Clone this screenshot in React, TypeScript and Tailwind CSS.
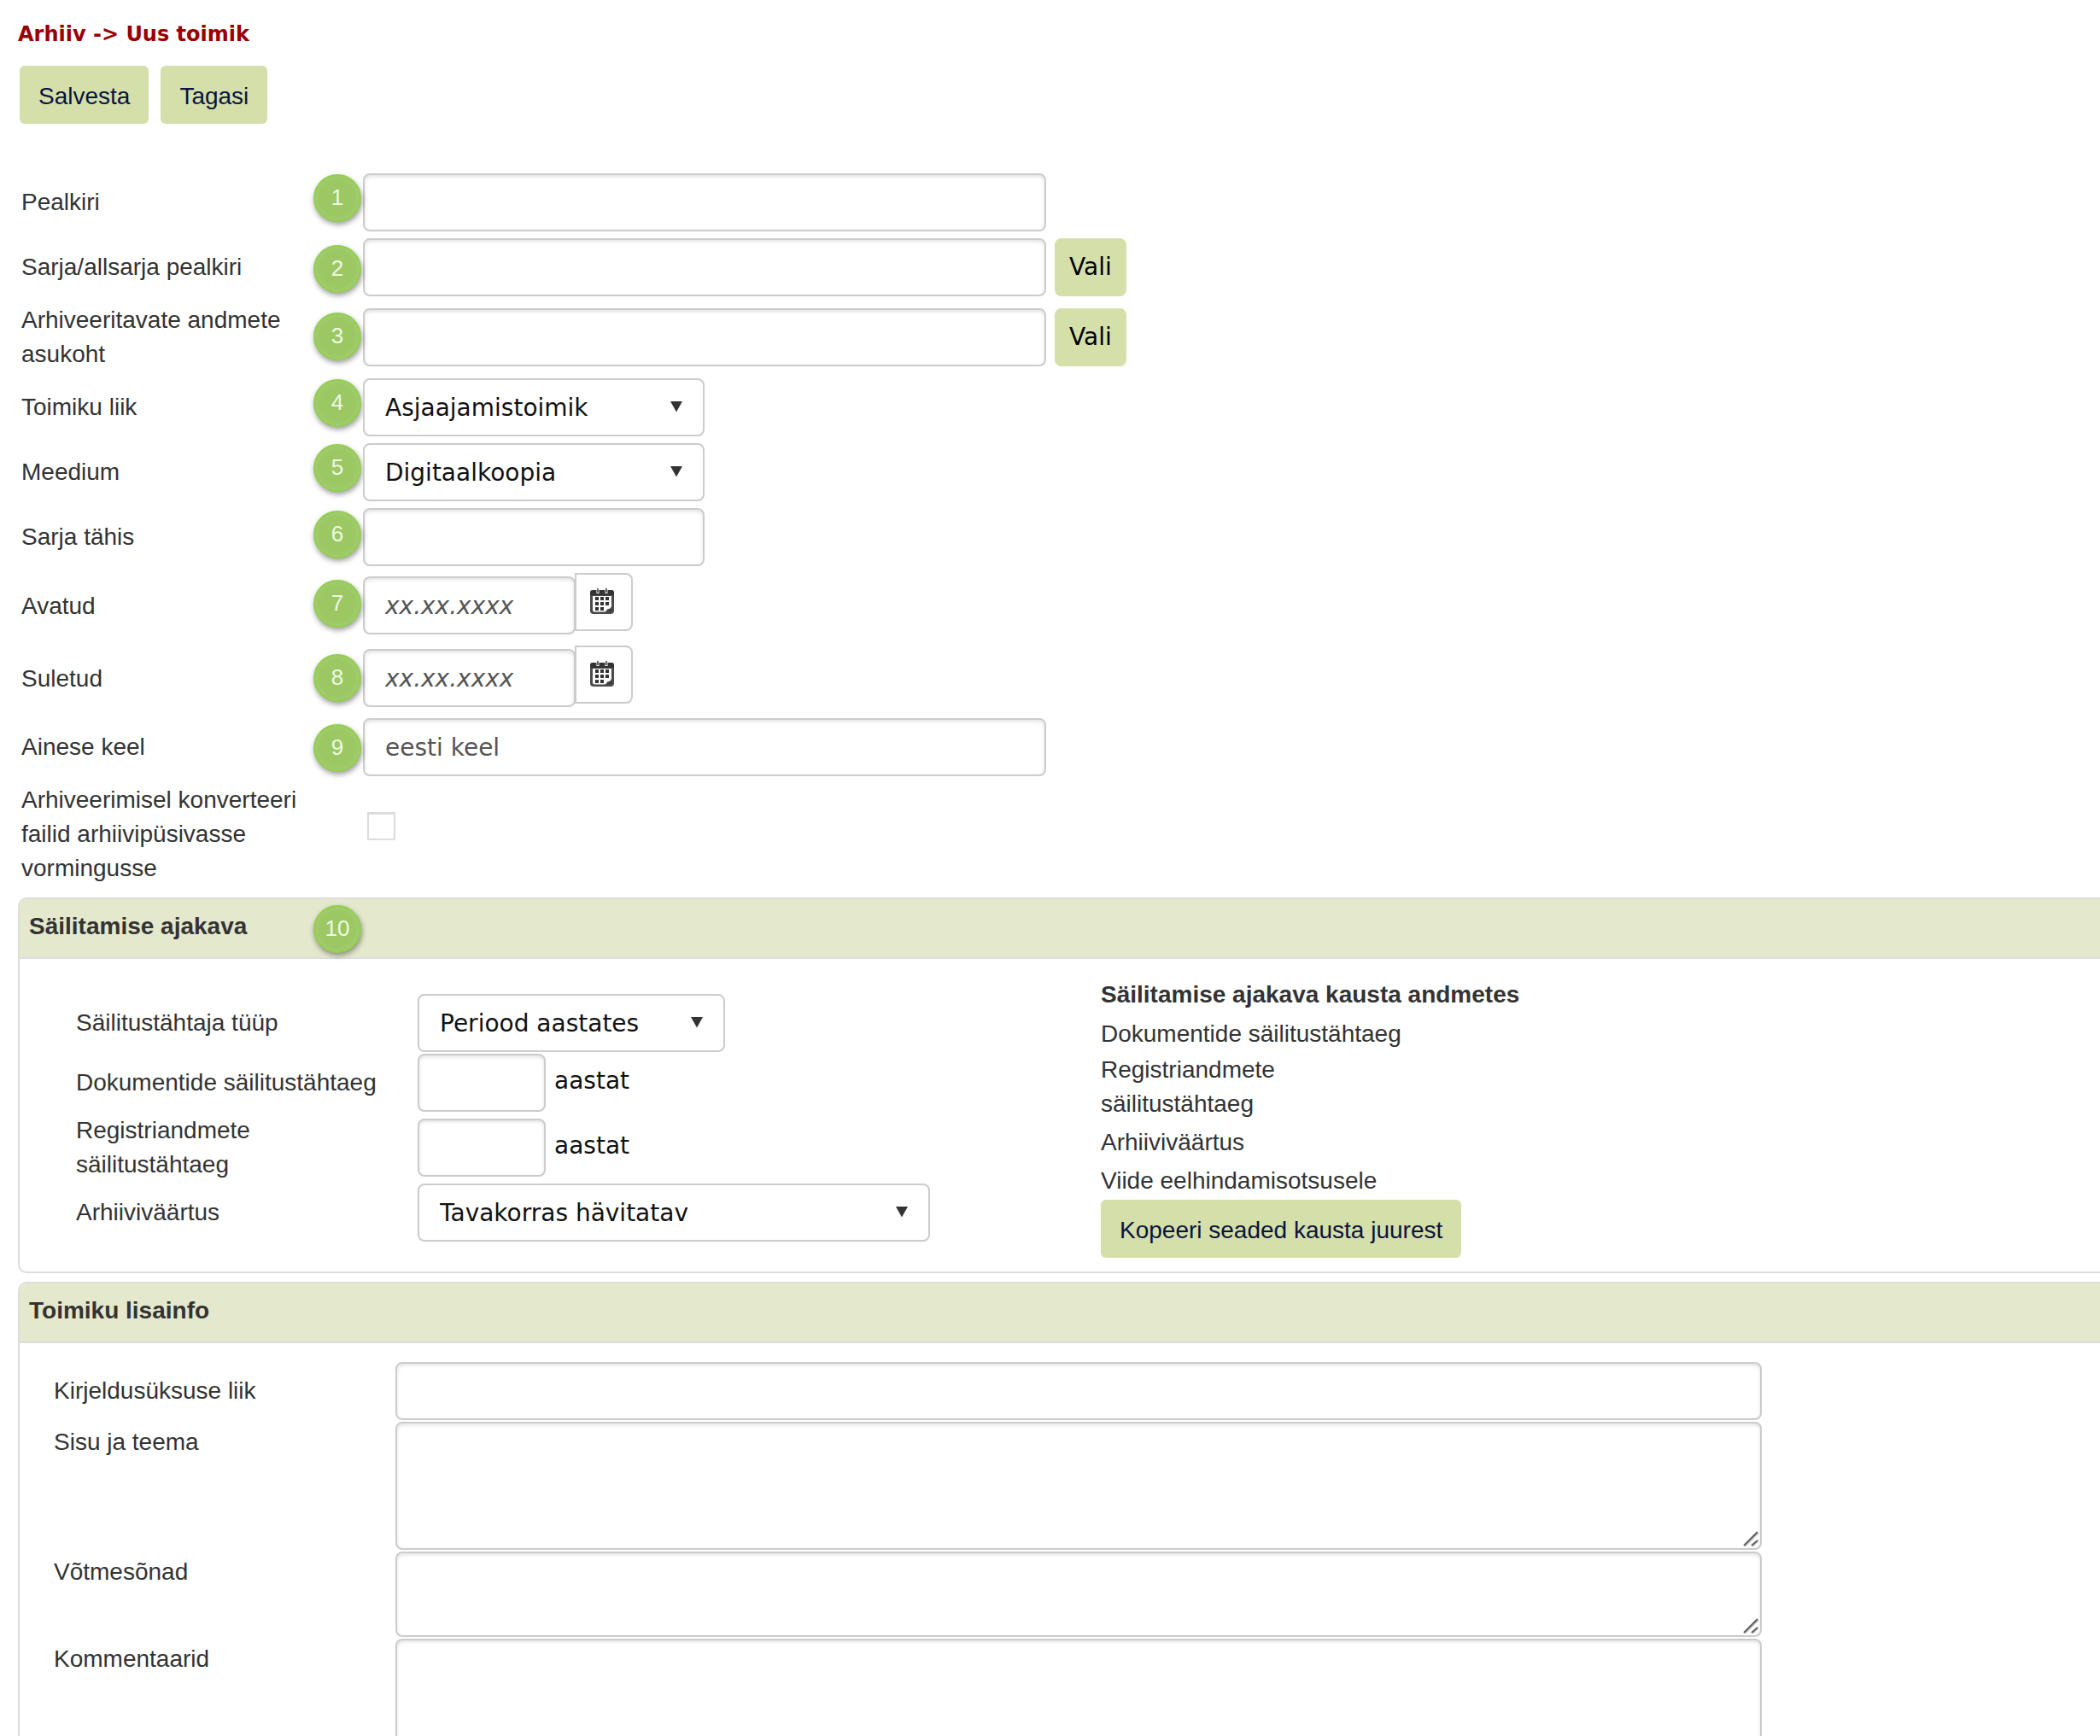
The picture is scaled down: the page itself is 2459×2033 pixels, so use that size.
import type { ReactNode } from 'react'

const campo = 'rounded-[8px] border-2 border-[#cccccc] bg-white px-6 font-[Verdana,"DejaVu_Sans",sans-serif] text-[28px]'
const insetShadow = 'shadow-[inset_0_2px_4px_rgba(0,0,0,0.12)]'

function Badge({ n, className }: { n: number; className: string }) {
  return (
    <span
      className={`absolute flex h-14 w-14 items-center justify-center rounded-full border-2 border-[#92d050]
                  bg-[#9bc862] pb-[2px] text-[26px] text-[#f0f7e4]
                  shadow-[1px_3px_6px_rgba(0,0,0,0.4),inset_0_0_8px_rgba(255,255,255,0.15)] ${className}`}
    >
      {n}
    </span>
  )
}

function Select({ id, value, className }: { id: string; value: string; className: string }) {
  return (
    <div className={`relative ${className}`}>
      <select id={id} className={`${campo} block h-[68px] w-full appearance-none pt-[2px] text-[#111111]`}>
        <option>{value}</option>
      </select>
      <svg className="pointer-events-none absolute top-[26px] right-[25px]" width="16" height="14" viewBox="0 0 16 14">
        <path d="M1 1h14L8 13.500z" fill="#333333" />
      </svg>
    </div>
  )
}

function TextInput({ id, className, placeholder, value }: { id: string; className: string; placeholder?: string; value?: string }) {
  return (
    <input
      id={id}
      type="text"
      placeholder={placeholder}
      defaultValue={value}
      className={`${campo} ${insetShadow} block h-[68px] text-[#555555] placeholder:text-[#555555] placeholder:italic ${className}`}
    />
  )
}

function TextArea({ id, className }: { id: string; className: string }) {
  return (
    <div className="relative">
      <textarea id={id} className={`${campo} ${insetShadow} block w-full resize-none text-[#555555] ${className}`} />
      <svg className="pointer-events-none absolute right-1 bottom-1" width="18" height="18" viewBox="0 0 18 18" strokeWidth="2">
        <path d="M2 18L18 2M11 18l7-7" stroke="#c8c8c8" />
        <path d="M1 17L17 1M10 17l7-6" stroke="#5f5f5f" />
      </svg>
    </div>
  )
}

function CalendarIcon() {
  return (
    <svg width="30" height="32" viewBox="0 0 30 32">
      <rect x="1" y="3" width="28" height="28" rx="4" fill="#4a4a4a" />
      <path d="M1 9V6a3 3 0 013-3h22a3 3 0 013 3v3z" fill="#333333" />
      <path d="M4 10h22v12q-1 3-5 3.500-1 2.500-3 3H6q-2 0-2-2z" fill="#ffffff" />
      <path d="M26 24v4h-5q4-1 5-4z" fill="#333333" />
      <path d="M10 1v6M20 1v6" stroke="#ffffff" strokeWidth="3" />
      <path d="M10 1v5M20 1v5" stroke="#666666" strokeWidth="2" />
      {[7, 13, 19].map(x => [11, 17, 23].map(y => (
        x === 19 && y === 23 ? null : <rect key={`${x}-${y}`} x={x} y={y} width="4" height="4" fill="#333333" />
      )))}
    </svg>
  )
}

function DateInput({ id }: { id: string }) {
  return (
    <div className="flex h-[77px] items-start">
      <TextInput id={id} placeholder="xx.xx.xxxx" className="mt-1 w-[249px]" />
      <button
        type="button"
        aria-label="Vali kuupäev"
        className="-ml-px flex h-[68px] w-[68px] items-center justify-center rounded-r-[8px] border-2 border-[#cccccc] bg-white pr-1 pb-[2px]"
      >
        <CalendarIcon />
      </button>
    </div>
  )
}

function Vali() {
  return (
    <button
      type="button"
      className="h-[68px] rounded-[8px] bg-[#d5dfa9] px-[17px] font-[Verdana,'DejaVu_Sans',sans-serif] text-[28px] text-black"
    >
      Vali
    </button>
  )
}

function Action({ children }: { children: string }) {
  return (
    <button type="button" className="h-[68px] rounded-[6px] bg-[#d5dfa9] px-[22px] pt-1 text-[#0b1440]">
      {children}
    </button>
  )
}

// label column + control column of the top form
function Row({ id, label, badge, children }: { id: string; label: string; badge?: ReactNode; children: ReactNode }) {
  return (
    <div className="relative flex items-center py-1">
      <label htmlFor={id} className="w-[400px] shrink-0 pr-[60px]">{label}</label>
      {badge}
      <div className="flex items-center gap-[10px]">{children}</div>
    </div>
  )
}

function YearsInput({ id }: { id: string }) {
  return (
    <div className="flex items-start gap-[10px]">
      <TextInput id={id} className="w-[150px]" />
      <span className="mt-3 font-[Verdana,'DejaVu_Sans',sans-serif] text-[#111111]">aastat</span>
    </div>
  )
}

function Panel({ title, badge, children }: { title: string; badge?: ReactNode; children: ReactNode }) {
  return (
    <section className="mb-[10px] ml-[21px] rounded-l-[10px] border-2 border-r-0 border-[#dddddd]">
      <div className="relative h-[70px] rounded-tl-[8px] border-b-2 border-[#dddddd] bg-[#e4e8cc] pt-3 pl-[11px]">
        <h2 className="font-bold">{title}</h2>
        {badge}
      </div>
      {children}
    </section>
  )
}

export default function App() {
  return (
    <form className="overflow-hidden bg-white pt-5 font-['Liberation_Sans',Arial,sans-serif] text-[28px] leading-[40px] text-[#333333]">
      <h1 className="ml-[21px] font-[Verdana,'DejaVu_Sans',sans-serif] text-[24px] font-bold text-[#990000]">
        Arhiiv -&gt; Uus toimik
      </h1>
      <div className="mt-[17px] ml-[23px] flex gap-[14px]">
        <Action>Salvesta</Action>
        <Action>Tagasi</Action>
      </div>

      <div className="mt-[54px] mb-[10px] ml-[25px]">
        <Row id="pealkiri" label="Pealkiri" badge={<Badge n={1} className="top-[5px] left-[342px]" />}>
          <TextInput id="pealkiri" className="w-[800px]" />
        </Row>
        <Row id="sarja" label="Sarja/allsarja pealkiri" badge={<Badge n={2} className="top-[12px] left-[342px]" />}>
          <TextInput id="sarja" className="w-[800px]" />
          <Vali />
        </Row>
        <Row id="asukoht" label="Arhiveeritavate andmete asukoht" badge={<Badge n={3} className="top-[15px] left-[342px]" />}>
          <TextInput id="asukoht" className="w-[800px]" />
          <Vali />
        </Row>
        <Row id="liik" label="Toimiku liik" badge={<Badge n={4} className="top-[5px] left-[342px]" />}>
          <Select id="liik" value="Asjaajamistoimik" className="w-[400px]" />
        </Row>
        <Row id="meedium" label="Meedium" badge={<Badge n={5} className="top-[5px] left-[342px]" />}>
          <Select id="meedium" value="Digitaalkoopia" className="w-[400px]" />
        </Row>
        <Row id="tahis" label="Sarja tähis" badge={<Badge n={6} className="top-[7px] left-[342px]" />}>
          <TextInput id="tahis" className="w-[400px]" />
        </Row>
        <Row id="avatud" label="Avatud" badge={<Badge n={7} className="top-[12px] left-[342px]" />}>
          <DateInput id="avatud" />
        </Row>
        <Row id="suletud" label="Suletud" badge={<Badge n={8} className="top-[14px] left-[342px]" />}>
          <DateInput id="suletud" />
        </Row>
        <Row id="keel" label="Ainese keel" badge={<Badge n={9} className="top-[11px] left-[342px]" />}>
          <TextInput id="keel" value="eesti keel" className="w-[800px]" />
        </Row>
        <Row id="konverteeri" label="Arhiveerimisel konverteeri failid arhiivipüsivasse vormingusse">
          <input
            id="konverteeri"
            type="checkbox"
            className="mb-5 ml-[5px] h-[33px] w-[33px] appearance-none border-2 border-[#dcdcdc] bg-white shadow-[inset_0_1px_1px_rgba(0,0,0,0.12)]"
          />
        </Row>
      </div>

      <Panel title="Säilitamise ajakava" badge={<Badge n={10} className="top-[7px] left-[344px]" />}>
        <div className="flex items-start px-[66px] pb-4">
          <div className="grid w-[1200px] shrink-0 grid-cols-[400px_1fr] items-center gap-y-[2px] pt-[41px]">
            <label htmlFor="tyyp">Säilitustähtaja tüüp</label>
            <Select id="tyyp" value="Periood aastates" className="w-[360px]" />
            <label htmlFor="dokumentide">Dokumentide säilitustähtaeg</label>
            <YearsInput id="dokumentide" />
            <label htmlFor="registri" className="pr-[60px]">Registriandmete säilitustähtaeg</label>
            <YearsInput id="registri" />
            <label htmlFor="vaartus">Arhiiviväärtus</label>
            <Select id="vaartus" value="Tavakorras hävitatav" className="w-[600px]" />
          </div>
          <div className="pt-[22px]">
            <h3 className="mb-[6px] font-bold">Säilitamise ajakava kausta andmetes</h3>
            <p className="mb-[2px]">Dokumentide säilitustähtaeg</p>
            <p className="mb-[5px] w-[240px]">Registriandmete säilitustähtaeg</p>
            <p className="mb-[5px]">Arhiiviväärtus</p>
            <p className="mb-[2px]">Viide eelhindamisotsusele</p>
            <Action>Kopeeri seaded kausta juurest</Action>
          </div>
        </div>
      </Panel>

      <Panel title="Toimiku lisainfo">
        <div className="grid grid-cols-[400px_1600px] items-start gap-y-[2px] pt-[22px] pl-10">
          <label htmlFor="kirjeldus" className="self-center">Kirjeldusüksuse liik</label>
          <TextInput id="kirjeldus" className="w-full" />
          <label htmlFor="sisu" className="pt-1">Sisu ja teema</label>
          <TextArea id="sisu" className="h-[150px]" />
          <label htmlFor="votmesonad" className="pt-1">Võtmesõnad</label>
          <TextArea id="votmesonad" className="h-[100px]" />
          <label htmlFor="kommentaarid" className="pt-1">Kommentaarid</label>
          <TextArea id="kommentaarid" className="h-[150px]" />
        </div>
      </Panel>
    </form>
  )
}
